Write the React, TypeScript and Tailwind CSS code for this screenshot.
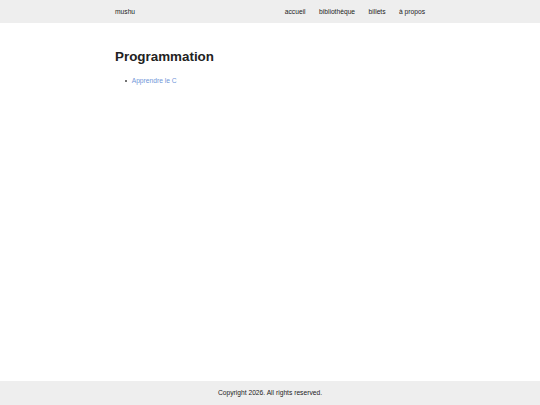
export default function App() {
  return (
    <div className="flex min-h-screen flex-col bg-white font-['Liberation_Sans',Arial,sans-serif] text-[#222]">
      <header className="bg-[#eeeeee]">
        <div className="mx-auto flex h-[23px] w-[310px] items-center justify-between pt-[1px] text-[6.7px]">
          <a href="#" className="text-[#222]">mushu</a>
          <nav className="flex gap-[13.4px]">
            <a href="#">accueil</a>
            <a href="#">bibliothèque</a>
            <a href="#">billets</a>
            <a href="#">à propos</a>
          </nav>
        </div>
      </header>

      <main className="mx-auto w-[310px] flex-1 pt-[26px]">
        <h1 className="text-[13.4px] font-bold leading-[16px]">Programmation</h1>
        <ul className="mt-[11px] list-none pl-[10px] text-[6.7px]">
          <li className="flex items-center gap-[4.5px]">
            <span className="h-[2.2px] w-[2.2px] rounded-full bg-[#444]" />
            <a href="#" className="text-[#7096d8]">Apprendre le C</a>
          </li>
        </ul>
      </main>

      <footer className="flex h-[24px] items-center justify-center bg-[#eeeeee] text-[6.7px]">
        Copyright 2026. All rights reserved.
      </footer>
    </div>
  )
}
